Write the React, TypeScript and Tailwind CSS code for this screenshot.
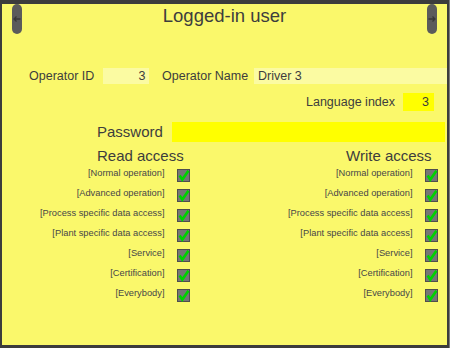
import React from "react";

const readRows = [
  "[Normal operation]",
  "[Advanced operation]",
  "[Process specific data access]",
  "[Plant specific data access]",
  "[Service]",
  "[Certification]",
  "[Everybody]",
];

function Check() {
  return (
    <div className="w-[13px] h-[13px] shrink-0 bg-[#767676] border border-[#4e4e4e] relative">
      <svg width="13" height="13" viewBox="0 0 13 13" className="absolute left-[-1px] top-[-1px] overflow-visible">
        <path d="M2.6 6.6 L5.3 10.6 L11.4 1.8" fill="none" stroke="#00d200" strokeWidth="2.6" strokeLinejoin="miter" />
      </svg>
    </div>
  );
}

function Pill({ dir }: { dir: "left" | "right" }) {
  return (
    <div className="w-[10px] h-[30px] rounded-[5px] bg-[#5b5b5b] flex items-center justify-center">
      <svg width="8" height="8" viewBox="0 0 8 8">
        {dir === "left" ? (
          <path d="M7.5 4 H1 M3.5 1.5 L1 4 L3.5 6.5" fill="none" stroke="#383838" strokeWidth="1.3" />
        ) : (
          <path d="M0.5 4 H7 M4.5 1.5 L7 4 L4.5 6.5" fill="none" stroke="#383838" strokeWidth="1.3" />
        )}
      </svg>
    </div>
  );
}

function AccessRows() {
  return (
    <div className="flex flex-col">
      {readRows.map((r) => (
        <div key={r} className="h-[20px] flex justify-end items-start">
          <span className="text-[9.3px] leading-[9px] text-[#474747] mr-[12.5px] whitespace-nowrap">{r}</span>
          <Check />
        </div>
      ))}
    </div>
  );
}

export default function App() {
  return (
    <div
      className="w-[450px] h-[348px] bg-[#3c3c3c] pt-[4px] pl-[2px] pr-[2px] pb-[3px] border-r border-[#7a7a7a]"
      style={{ fontFamily: '"Liberation Sans", Arial, sans-serif' }}
    >
      <div className="w-[445px] h-[341px] bg-[#faf86b] flex flex-col text-[#3d3d3d]">
        {/* header */}
        <div className="flex items-start h-[30px]">
          <div className="ml-[10px]">
            <Pill dir="left" />
          </div>
          <div className="flex-1 text-center text-[18.5px] leading-[21px] pt-[0.5px]">Logged-in user</div>
          <div className="mr-[10px]">
            <Pill dir="right" />
          </div>
        </div>

        {/* operator row */}
        <div className="mt-[34px] flex items-center h-[16px] pl-[27px] text-[12.5px]">
          <div className="w-[74px] whitespace-nowrap">Operator ID</div>
          <div className="w-[46px] h-[16px] bg-[#fbfba2] text-right pr-[3.5px] leading-[16px]">3</div>
          <div className="ml-[13px] w-[92px] whitespace-nowrap">Operator Name</div>
          <div className="flex-1 h-[16px] bg-[#fbfba2] pl-[4px] leading-[16px]">Driver 3</div>
        </div>

        {/* language row */}
        <div className="mt-[9px] flex items-center justify-end h-[18px] pr-[13px] text-[12.5px]">
          <div className="whitespace-nowrap">Language index</div>
          <div className="ml-[8px] w-[31px] h-[18px] bg-[#ffff00] text-right pr-[5px] leading-[18px]">3</div>
        </div>

        {/* password row */}
        <div className="mt-[11px] flex items-center h-[20px] pl-[95px] pr-[2px] text-[15px]">
          <div className="w-[75px] whitespace-nowrap">Password</div>
          <div className="flex-1 h-[20px] bg-[#ffff00]" />
        </div>

        {/* access columns */}
        <div className="mt-[5px] flex">
          <div className="w-[188px] flex flex-col">
            <div className="pl-[95px] text-[15px] leading-[17px] whitespace-nowrap">Read access</div>
            <div className="mt-[5px]">
              <AccessRows />
            </div>
          </div>
          <div className="w-[248px] flex flex-col">
            <div className="pl-[156px] text-[15px] leading-[17px] whitespace-nowrap">Write access</div>
            <div className="mt-[5px]">
              <AccessRows />
            </div>
          </div>
        </div>
      </div>
    </div>
  );
}
